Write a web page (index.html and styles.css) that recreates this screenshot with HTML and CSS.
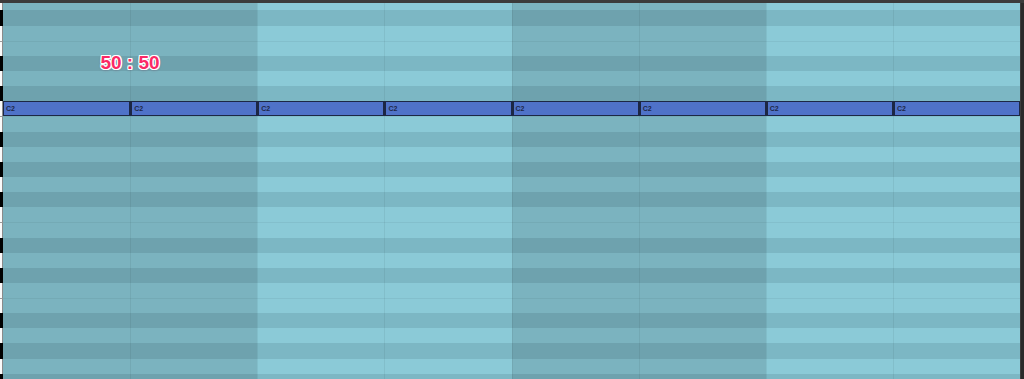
FILE: index.html
```html
<!DOCTYPE html>
<html lang="en">
<head>
    <meta charset="UTF-8">
    <title>Piano Roll</title>
    <link rel="stylesheet" href="styles.css">
</head>
<body>
    <div class="topbar"></div>
    <div class="main">
        <div class="board">
            <div class="row white first"><div class="key"></div><div class="lane"></div></div>
            <div class="row black"><div class="key"></div><div class="lane"></div></div>
            <div class="row white"><div class="key"></div><div class="lane"></div></div>
            <div class="row white split"><div class="key"></div><div class="lane"></div></div>
            <div class="row black"><div class="key"></div><div class="lane"></div></div>
            <div class="row white"><div class="key"></div><div class="lane"></div></div>
            <div class="row black"><div class="key"></div><div class="lane"></div></div>
            <div class="row white">
                <div class="key"></div>
                <div class="lane notes">
                    <div class="note">C2</div>
                    <div class="note">C2</div>
                    <div class="note">C2</div>
                    <div class="note">C2</div>
                    <div class="note">C2</div>
                    <div class="note">C2</div>
                    <div class="note">C2</div>
                    <div class="note">C2</div>
                </div>
            </div>
            <div class="row white split"><div class="key"></div><div class="lane"></div></div>
            <div class="row black"><div class="key"></div><div class="lane"></div></div>
            <div class="row white"><div class="key"></div><div class="lane"></div></div>
            <div class="row black"><div class="key"></div><div class="lane"></div></div>
            <div class="row white"><div class="key"></div><div class="lane"></div></div>
            <div class="row black"><div class="key"></div><div class="lane"></div></div>
            <div class="row white"><div class="key"></div><div class="lane"></div></div>
            <div class="row white split"><div class="key"></div><div class="lane"></div></div>
            <div class="row black"><div class="key"></div><div class="lane"></div></div>
            <div class="row white"><div class="key"></div><div class="lane"></div></div>
            <div class="row black"><div class="key"></div><div class="lane"></div></div>
            <div class="row white"><div class="key"></div><div class="lane"></div></div>
            <div class="row white split"><div class="key"></div><div class="lane"></div></div>
            <div class="row black"><div class="key"></div><div class="lane"></div></div>
            <div class="row white"><div class="key"></div><div class="lane"></div></div>
            <div class="row black"><div class="key"></div><div class="lane"></div></div>
            <div class="row white"><div class="key"></div><div class="lane"></div></div>
            <div class="row black"><div class="key"></div><div class="lane"></div></div>

            <div class="cols">
                <div class="col shade"></div>
                <div class="col shade"></div>
                <div class="col"></div>
                <div class="col"></div>
                <div class="col shade"></div>
                <div class="col shade"></div>
                <div class="col"></div>
                <div class="col"></div>
            </div>

            <div class="ratio">50 : 50</div>
        </div>
        <div class="edge"></div>
    </div>
</body>
</html>
```

FILE: styles.css
```css
body {
    margin: 0;
    height: 379px;
    overflow: hidden;
    background-color: #2c2c2c;
    font-family: "Liberation Sans", Arial, sans-serif;
}
.topbar {
    height: 3px;
    background-color: #3b3b3b;
}
.main {
    display: flex;
}
.board {
    flex: 1;
    position: relative;
}
.edge {
    width: 4px;
    background-color: #2a2a2a;
    border-left: 1px solid #3d3d3d;
    box-sizing: border-box;
}
.row {
    display: flex;
    height: 15.15px;
}
.row.first {
    height: 7.4px;
}
.key {
    width: 3px;
    box-sizing: border-box;
    background-color: #fafafa;
    border-right: 1px solid #8a8a8a;
}
.row.black .key {
    background-color: #000;
    border-right-color: #000;
}
.row.split .key {
    border-top: 1px solid #9a9a9a;
}
.lane {
    flex: 1;
    background-color: #8bcad7;
}
.row.black .lane {
    background-color: #7cb7c4;
}
.row.split .lane {
    box-shadow: inset 0 1px 0 rgba(0, 0, 0, 0.05);
}
.notes {
    display: grid;
    grid-template-columns: repeat(8, 1fr);
    position: relative;
    z-index: 2;
}
.note {
    background-color: #4f72c8;
    border: 1px solid #1c2744;
    border-left-width: 2px;
    box-sizing: border-box;
    color: #1e2848;
    font-size: 7px;
    font-weight: bold;
    line-height: 13px;
    padding-left: 2px;
    overflow: hidden;
}
.note:first-child {
    border-left-width: 1px;
}
.cols {
    position: absolute;
    top: 0;
    bottom: 0;
    left: 3px;
    right: 0;
    display: grid;
    grid-template-columns: repeat(8, 1fr);
    z-index: 1;
    pointer-events: none;
}
.col {
    border-left: 1px solid rgba(0, 0, 0, 0.06);
}
.col:first-child {
    border-left: none;
}
.col.shade {
    background-color: rgba(0, 0, 0, 0.11);
}
.ratio {
    position: absolute;
    top: 50px;
    left: 130px;
    transform: translateX(-50%);
    z-index: 3;
    color: #fb2a66;
    font-size: 19px;
    font-weight: bold;
    line-height: 19px;
    white-space: nowrap;
    text-shadow:
        1px 0 0 #fff, -1px 0 0 #fff, 0 1px 0 #fff, 0 -1px 0 #fff,
        1px 1px 0 #fff, -1px -1px 0 #fff, 1px -1px 0 #fff, -1px 1px 0 #fff,
        0 1px 3px rgba(120, 0, 40, 0.35);
}
```
